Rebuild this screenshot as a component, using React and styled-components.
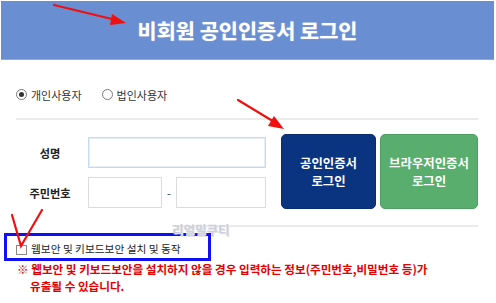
import React from "react";
import styled, { createGlobalStyle } from "styled-components";

const Global = createGlobalStyle`
  html, body { margin: 0; padding: 0; background: #fff; }
  body { font-family: "Noto Sans CJK KR", "Noto Sans", sans-serif; }
  * { box-sizing: border-box; }
`;

const Page = styled.div`
  position: relative;
  width: 496px;
  height: 303px;
  overflow: hidden;
  background: #fff;
`;

const Header = styled.header`
  margin: 1px 2px 0 1px;
  height: 59px;
  background: #6a8ed2;
  border-bottom: 1px solid #8ea9dc;
  display: flex;
  align-items: center;
  justify-content: center;
`;

const Title = styled.h1`
  margin: 0;
  color: #fff;
  font-size: 20.8px;
  font-weight: 700;
  letter-spacing: 0;
  text-shadow: 0 0 1px rgba(255, 255, 255, 0.6);
`;

const Content = styled.div`
  padding: 0 18px 0 16px;
`;

const RadioRow = styled.div`
  margin-top: 27px;
  height: 15px;
  display: flex;
  align-items: center;
  gap: 20px;
`;

const RadioLabel = styled.label`
  display: flex;
  align-items: center;
  gap: 4px;
  font-size: 11px;
  color: #333;
`;

const RadioDot = styled.span`
  width: 11px;
  height: 11px;
  border-radius: 50%;
  border: 1px solid #7a7a7a;
  background: #fff;
  display: flex;
  align-items: center;
  justify-content: center;
  &::after {
    content: "";
    width: 5px;
    height: 5px;
    border-radius: 50%;
    background: ${(p) => (p.$checked ? "#333" : "transparent")};
  }
`;

const Divider = styled.div`
  height: 2px;
  background: #ebebeb;
  margin-top: ${(p) => p.$mt}px;
  margin-left: ${(p) => p.$ml || 0}px;
`;

const FormArea = styled.div`
  margin-top: 14px;
  display: flex;
  align-items: flex-start;
`;

const Fields = styled.div`
  margin-top: 3px;
  display: grid;
  grid-template-columns: 68px auto;
  column-gap: 4px;
  row-gap: 9px;
  align-items: center;
`;

const FieldLabel = styled.span`
  text-align: center;
  font-size: 11.2px;
  font-weight: 700;
  color: #222;
`;

const Input = styled.div`
  width: ${(p) => p.$w}px;
  height: 31px;
  background: #fff;
  border: 1px solid ${(p) => (p.$focus ? "#c6daee" : "#dcdcdc")};
  box-shadow: ${(p) => (p.$focus ? "inset 0 0 0 1px #e6eff8" : "none")};
`;

const SsnRow = styled.div`
  display: flex;
  align-items: center;
`;

const Dash = styled.span`
  width: 14px;
  text-align: center;
  font-size: 11px;
  color: #333;
`;

const Buttons = styled.div`
  margin-left: 15px;
  display: flex;
  gap: 4px;
`;

const LoginButton = styled.button`
  width: ${(p) => p.$w}px;
  height: 75px;
  border-radius: 5px;
  border: 1px solid ${(p) => (p.$green ? "#4f9e63" : "#0a2d70")};
  background: ${(p) => (p.$green ? "#59ae6d" : "#0b3480")};
  color: #fff;
  font-family: inherit;
  font-size: 12.4px;
  font-weight: 700;
  line-height: 18px;
  padding: 0;
  display: flex;
  flex-direction: column;
  align-items: center;
  justify-content: center;
`;

const Notice = styled.div`
  margin-left: 4px;
  margin-top: 6px;
  width: 207px;
  height: 28px;
  border: 3px solid #1010f5;
  display: flex;
  align-items: flex-end;
  padding: 0 0 2px 9px;
  gap: 4px;
`;

const CheckBox = styled.span`
  width: 11px;
  height: 10px;
  border: 1px solid #8a8a8a;
  background: #fafafa;
  margin-bottom: 1px;
`;

const CheckText = styled.span`
  font-size: 10.7px;
  color: #222;
  line-height: 14px;
`;

const Warning = styled.p`
  margin: 0;
  padding-left: 30px;
  text-indent: -13px;
  color: #e50000;
  font-size: 11.6px;
  font-weight: 700;
  line-height: 17px;
  white-space: nowrap;
`;

const Watermark = styled.span`
  position: absolute;
  left: 172px;
  top: 221px;
  line-height: 18px;
  font-size: 12.5px;
  font-weight: 700;
  color: #cdd0d8;
  text-shadow: 1px 1px 0 #e4e6ec;
`;

const Marks = styled.svg`
  position: absolute;
  left: 0;
  top: 0;
  pointer-events: none;
`;

export default function App() {
  return (
    <Page>
      <Global />
      <Header>
        <Title>비회원 공인인증서 로그인</Title>
      </Header>
      <Content>
        <RadioRow>
          <RadioLabel>
            <RadioDot $checked />
            개인사용자
          </RadioLabel>
          <RadioLabel>
            <RadioDot />
            법인사용자
          </RadioLabel>
        </RadioRow>
        <Divider $mt={16} />
        <FormArea>
          <Fields>
            <FieldLabel>성명</FieldLabel>
            <Input $w={178} $focus />
            <FieldLabel>주민번호</FieldLabel>
            <SsnRow>
              <Input $w={74} />
              <Dash>-</Dash>
              <Input $w={90} />
            </SsnRow>
          </Fields>
          <Buttons>
            <LoginButton $w={95}>
              <span>공인인증서</span>
              <span>로그인</span>
            </LoginButton>
            <LoginButton $w={98} $green>
              <span>브라우저인증서</span>
              <span>로그인</span>
            </LoginButton>
          </Buttons>
        </FormArea>
        <Divider $mt={16} $ml={156} />
      </Content>
      <Notice>
        <CheckBox />
        <CheckText>웹보안 및 키보드보안 설치 및 동작</CheckText>
      </Notice>
      <Warning>
        ※ 웹보안 및 키보드보안을 설치하지 않을 경우 입력하는 정보(주민번호,비밀번호 등)가
        <br />
        유출될 수 있습니다.
      </Warning>
      <Watermark>리얼밀쿠티</Watermark>
      <Marks width="496" height="303" viewBox="0 0 496 303">
        <g stroke="#f01010" strokeWidth="2.2" fill="none" strokeLinecap="round">
          <line x1="54" y1="5" x2="116" y2="20" />
          <line x1="238" y1="100" x2="276" y2="123" />
          <polyline points="12,215 21,246 42,210" />
        </g>
        <g fill="#f01010">
          <polygon points="126,23 112,14 110,25" />
          <polygon points="284,129 274,116 268,126" />
        </g>
      </Marks>
    </Page>
  );
}
